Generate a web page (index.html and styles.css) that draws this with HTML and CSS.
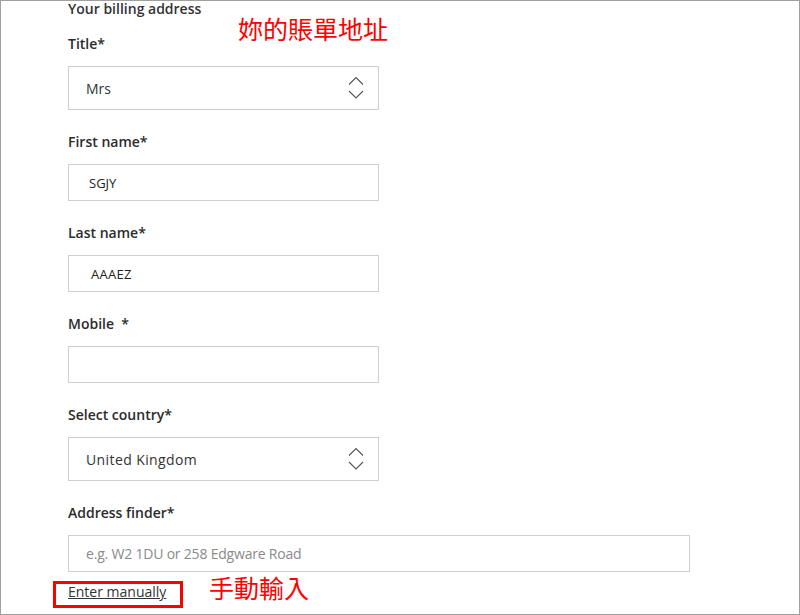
FILE: index.html
```html
<!DOCTYPE html>
<html lang="en">
<head>
<meta charset="utf-8">
<title>Billing address</title>
<link rel="stylesheet" href="styles.css">
</head>
<body>
<div class="frame">
  <div class="form">
    <h2 class="heading">Your billing address</h2>

    <div class="field">
      <label class="label">Title*</label>
      <div class="select select-short">
        <span class="value">Mrs</span>
        <svg class="chev" width="16" height="24" viewBox="0 0 16 24" aria-hidden="true">
          <path d="M1 8.5 L8 1.5 L15 8.5" fill="none" stroke="#555" stroke-width="1.1"/>
          <path d="M1 15 L8 22 L15 15" fill="none" stroke="#555" stroke-width="1.1"/>
        </svg>
      </div>
    </div>

    <div class="field">
      <label class="label">First name*</label>
      <div class="input input-short"><span class="typed">SGJY</span></div>
    </div>

    <div class="field">
      <label class="label">Last name*</label>
      <div class="input input-short"><span class="typed typed-wide">AAAEZ</span></div>
    </div>

    <div class="field">
      <label class="label">Mobile &nbsp;*</label>
      <div class="input input-short"></div>
    </div>

    <div class="field">
      <label class="label">Select country*</label>
      <div class="select select-short">
        <span class="value value-wide">United Kingdom</span>
        <svg class="chev" width="16" height="24" viewBox="0 0 16 24" aria-hidden="true">
          <path d="M1 8.5 L8 1.5 L15 8.5" fill="none" stroke="#555" stroke-width="1.1"/>
          <path d="M1 15 L8 22 L15 15" fill="none" stroke="#555" stroke-width="1.1"/>
        </svg>
      </div>
    </div>

    <div class="field field-last">
      <label class="label">Address finder*</label>
      <div class="input input-long"><span class="placeholder">e.g. W2 1DU or 258 Edgware Road</span></div>
    </div>

    <a class="manual" href="#">Enter manually</a>
  </div>

  <div class="note note-top">妳的賬單地址</div>
  <div class="note note-bottom">手動輸入</div>
  <div class="highlight"></div>
</div>
</body>
</html>
```

FILE: styles.css
```css
* { box-sizing: border-box; }

html, body {
  margin: 0;
  padding: 0;
  background: #fff;
}

.frame {
  position: relative;
  width: 800px;
  height: 615px;
  border: 1px solid #a0a0a0;
  overflow: hidden;
  padding-left: 67px;
  font-family: "Open Sans", "Noto Sans", sans-serif;
  color: #2b2b2b;
}

.form {
  display: flex;
  flex-direction: column;
  align-items: flex-start;
}

.heading {
  margin: 0 0 17px 0;
  font-size: 14px;
  line-height: 16px;
  font-weight: 600;
  color: #333;
}

.field {
  display: flex;
  flex-direction: column;
  margin-bottom: 22px;
}

.field-last { margin-bottom: 0; }

.label {
  font-size: 14px;
  line-height: 20px;
  font-weight: 600;
  color: #2b2b2b;
  margin-bottom: 12px;
}

.select,
.input {
  display: flex;
  align-items: center;
  border: 1px solid #cfcfcf;
  background: #fff;
}

.select {
  height: 44px;
  padding: 0 14px 0 17px;
  justify-content: space-between;
}

.input { height: 37px; padding: 0 17px; }

.select-short, .input-short { width: 311px; }
.input-long { width: 622px; }

.value {
  font-size: 14px;
  color: #333;
}
.value-wide { letter-spacing: 0.4px; }

.chev { display: block; }

.typed {
  font-size: 13px;
  color: #222;
  padding-left: 3px;
}
.typed-wide { padding-left: 5px; letter-spacing: 0.3px; }

.placeholder {
  font-size: 14px;
  color: #8a8a8a;
  letter-spacing: -0.2px;
}

.manual {
  margin-top: 12px;
  font-size: 14px;
  line-height: 16px;
  color: #333;
  text-decoration: underline;
}

.note {
  position: absolute;
  font-family: "Noto Sans CJK TC", "Noto Sans CJK SC", sans-serif;
  font-size: 25px;
  line-height: 30px;
  color: #ff0000;
}
.note-top { left: 237px; top: 12px; }
.note-bottom { left: 208px; top: 571px; }

.highlight {
  position: absolute;
  left: 52px;
  top: 580px;
  width: 130px;
  height: 27px;
  border: 3px solid #ff0000;
}
```
